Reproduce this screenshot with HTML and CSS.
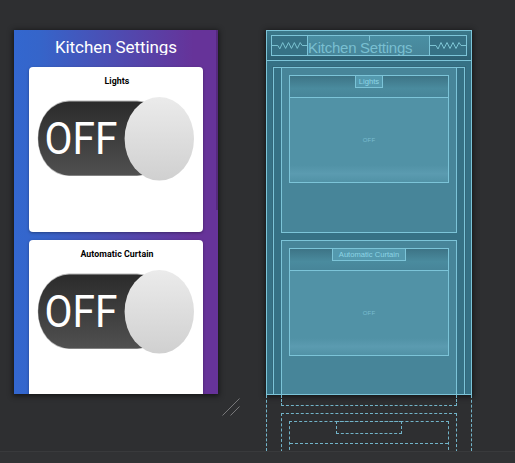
FILE: index.html
```html
<!DOCTYPE html>
<html lang="en">
<head>
<meta charset="utf-8">
<title>Kitchen Settings</title>
<link rel="stylesheet" href="styles.css">
</head>
<body>
<svg class="defs" width="0" height="0">
  <defs>
    <linearGradient id="track" x1="0" y1="0" x2="0" y2="1"><stop offset="0" stop-color="#2b2b2b"/><stop offset="1" stop-color="#505050"/></linearGradient>
    <linearGradient id="knob" x1="0" y1="0" x2="0" y2="1"><stop offset="0" stop-color="#ebebeb"/><stop offset="1" stop-color="#d0d0d0"/></linearGradient>
    <symbol id="toggle" viewBox="0 0 160 86">
      <rect x=".8" y="4.6" width="130" height="75.5" rx="31" ry="37" fill="#b5b5b5"/>
      <rect x="1.2" y="5.4" width="130" height="74" rx="31" ry="36.5" fill="url(#track)"/>
      <text x="7.6" y="57.600" font-family="Roboto" font-size="44.5" textLength="73" lengthAdjust="spacingAndGlyphs" fill="#fff">OFF</text>
      <ellipse cx="122.3" cy="42.8" rx="34.7" ry="41.8" fill="url(#knob)"/>
    </symbol>
    <symbol id="spring" viewBox="0 0 36 19">
      <path d="M0 9.5H6L8 13L11 6.5L14 12.5L17 6.5L20 12.5L23 6.5L26 12.5L29 6.5L31 9.5H36" fill="none" stroke="#7cc4d3"/>
    </symbol>
  </defs>
</svg>
<main class="stage">
  <section class="phone">
    <header class="title"><span>Kitchen Settings</span></header>
    <article class="card"><h2>Lights</h2><svg class="toggle"><use href="#toggle"/></svg></article>
    <article class="card"><h2>Automatic Curtain</h2><svg class="toggle"><use href="#toggle"/></svg></article>
    <i class="scrollbar"></i>
  </section>
  <svg class="handle" width="18" height="18" viewBox="0 0 18 18"><path d="M.5 17.5L17.5 .5M8.500 17.500L17.500 8.500" stroke="#8b8c8d" stroke-width=".8"/></svg>
  <section class="blueprint">
    <div class="surface">
      <header class="bp-bar">
        <div class="bp-row">
          <svg class="spring"><use href="#spring"/></svg>
          <div class="bp-title">Kitchen Settings</div>
          <svg class="spring end"><use href="#spring"/></svg>
        </div>
      </header>
      <div class="bp-scroll">
        <div class="bp-card"><div class="bp-inner"><div class="bp-head"><span class="bp-label lights">Lights</span></div><div class="bp-toggle">OFF</div></div></div>
        <div class="bp-card"><div class="bp-inner"><div class="bp-head"><span class="bp-label curtain">Automatic Curtain</span></div><div class="bp-toggle">OFF</div></div></div>
      </div>
    </div>
    <div class="overflow">
      <div class="ghost-end"></div>
      <div class="ghost-card"><div class="ghost-inner"><div class="ghost-head"><span class="ghost-label"></span></div></div></div>
    </div>
  </section>
</main>
<footer class="status"></footer>
</body>
</html>
```
FILE: styles.css
```css
* { box-sizing: border-box; }
body {
  margin: 0;
  width: 515px;
  height: 463px;
  overflow: hidden;
  background: #2e2f31;
  font-family: Roboto, "Liberation Sans", sans-serif;
}
.defs { display: block; height: 0; }
.stage {
  display: flex;
  height: 451px;
  padding: 30px 0 0 14px;
  overflow: hidden;
}
.status { height: 12px; background: #313234; border-top: 1px solid #393a3c; }

/* Design preview */
.phone {
  position: relative;
  display: flex;
  flex-direction: column;
  align-items: center;
  width: 204px;
  height: 364px;
  overflow: hidden;
  flex: none;
  background: linear-gradient(90deg, #3367cf 0, #3565ca 12%, #663399 88%);
  box-shadow: 0 1px 5px 1px #151617;
}
.title {
  height: 25px;
  margin-bottom: 12px;
  overflow: hidden;
  flex: none;
  padding-top: 6px;
  font-size: 17px;
  letter-spacing: -.08px;
  line-height: 22px;
  color: #fff;
  white-space: nowrap;
}
.card {
  width: 174px;
  height: 165px;
  flex: none;
  margin-bottom: 8px;
  padding-top: 9px;
  border-radius: 4px;
  background: #fff;
  box-shadow: 0 1px 3px rgba(0, 0, 0, .35);
  text-align: center;
}
.card h2 {
  margin: 0;
  padding-left: 2px;
  font-size: 8.8px;
  letter-spacing: .06px;
  line-height: 11px;
  font-weight: 700;
  color: #000;
}
.toggle { display: block; width: 160px; height: 86px; margin: 9px 0 0 8px; }
.scrollbar { position: absolute; top: 0; right: 0; width: 2px; height: 180px; background: #55297c; }
.handle { flex: none; margin: 368px 26px 0 4px; }

/* Blueprint */
.blueprint { width: 206px; flex: none; }
.surface {
  height: 365px;
  border: 1px solid #7cc4d8;
  background: #367185;
  box-shadow: 0 1px 5px 1px #151617;
  overflow: hidden;
}
.bp-bar { height: 30px; padding: 4px; border-bottom: 1px solid #7cc4d8; background: linear-gradient(#3b788a, #2d6073); }
.bp-row { display: flex; height: 21px; border: 1px solid #7cc4d8; background: #367185; }
.spring { width: 35px; height: 19px; flex: none; }
.spring.end { width: 36px; }
.bp-title {
  flex: 1;
  border: solid #7cc4d8;
  border-width: 0 1px;
  background: linear-gradient(90deg, transparent 50%, #7cc4d8 50%, #7cc4d8 51%, transparent 51%) 0 0 / 100% 5px no-repeat, linear-gradient(#4a8fa3, #478599);
  font: 15px/24px "Liberation Sans", sans-serif;
  letter-spacing: -.26px;
  color: #79bfd1;
  white-space: nowrap;
  overflow: hidden;
}
.bp-scroll {
  width: 192px;
  height: 335px;
  margin: 6px 0 0 6px;
  padding: 0 7px;
  border: 1px solid #7cc4d8;
  box-shadow: 0 0 0 1px #34687b;
}
.bp-card {
  height: 165px;
  margin-bottom: 7px;
  padding: 7px;
  border: 1px solid #7cc4d8;
  border-top-width: 0;
  background: #478599;
}
.bp-card + .bp-card { border-top-width: 1px; }
.bp-inner { height: 108px; border: 1px solid #7cc4d8; }
.bp-head {
  height: 22px;
  display: flex;
  justify-content: center;
  align-items: flex-start;
  border-bottom: 1px solid #7cc4d8;
  background: linear-gradient(#3d7486, #4a8b9e 60%, #478599);
}
.bp-label {
  height: 13px;
  margin-top: -1px;
  border: 1px solid #7cc4d8;
  background: #5499ae;
  color: #8dd5e5;
  font: 7.6px/11px "Liberation Sans", sans-serif;
  text-align: center;
  white-space: nowrap;
}
.lights { width: 28px; }
.curtain { width: 74px; }
.bp-toggle {
  height: 84px;
  background: linear-gradient(#5192a6 0 80%, #5b9bb0 90%, #5192a6);
  color: #79bdcf;
  font: 6px/84px "Liberation Sans", sans-serif;
  letter-spacing: .2px;
  text-align: center;
}

/* Content beyond the visible screen */
.overflow {
  height: 56px;
  overflow: hidden;
  padding: 0 14px;
  border: dashed #72b4c9;
  border-width: 0 1px;
}
.ghost-end { height: 11px; border: dashed #72b4c9; border-width: 0 1px 1px; }
.ghost-card { height: 60px; margin-top: 7px; padding: 7px; border: 1px dashed #72b4c9; }
.ghost-inner { height: 60px; border: 1px dashed #72b4c9; }
.ghost-head { height: 22px; display: flex; justify-content: center; border-bottom: 1px dashed #72b4c9; }
.ghost-label { width: 66px; height: 13px; margin-top: -1px; border: 1px dashed #72b4c9; }
```
